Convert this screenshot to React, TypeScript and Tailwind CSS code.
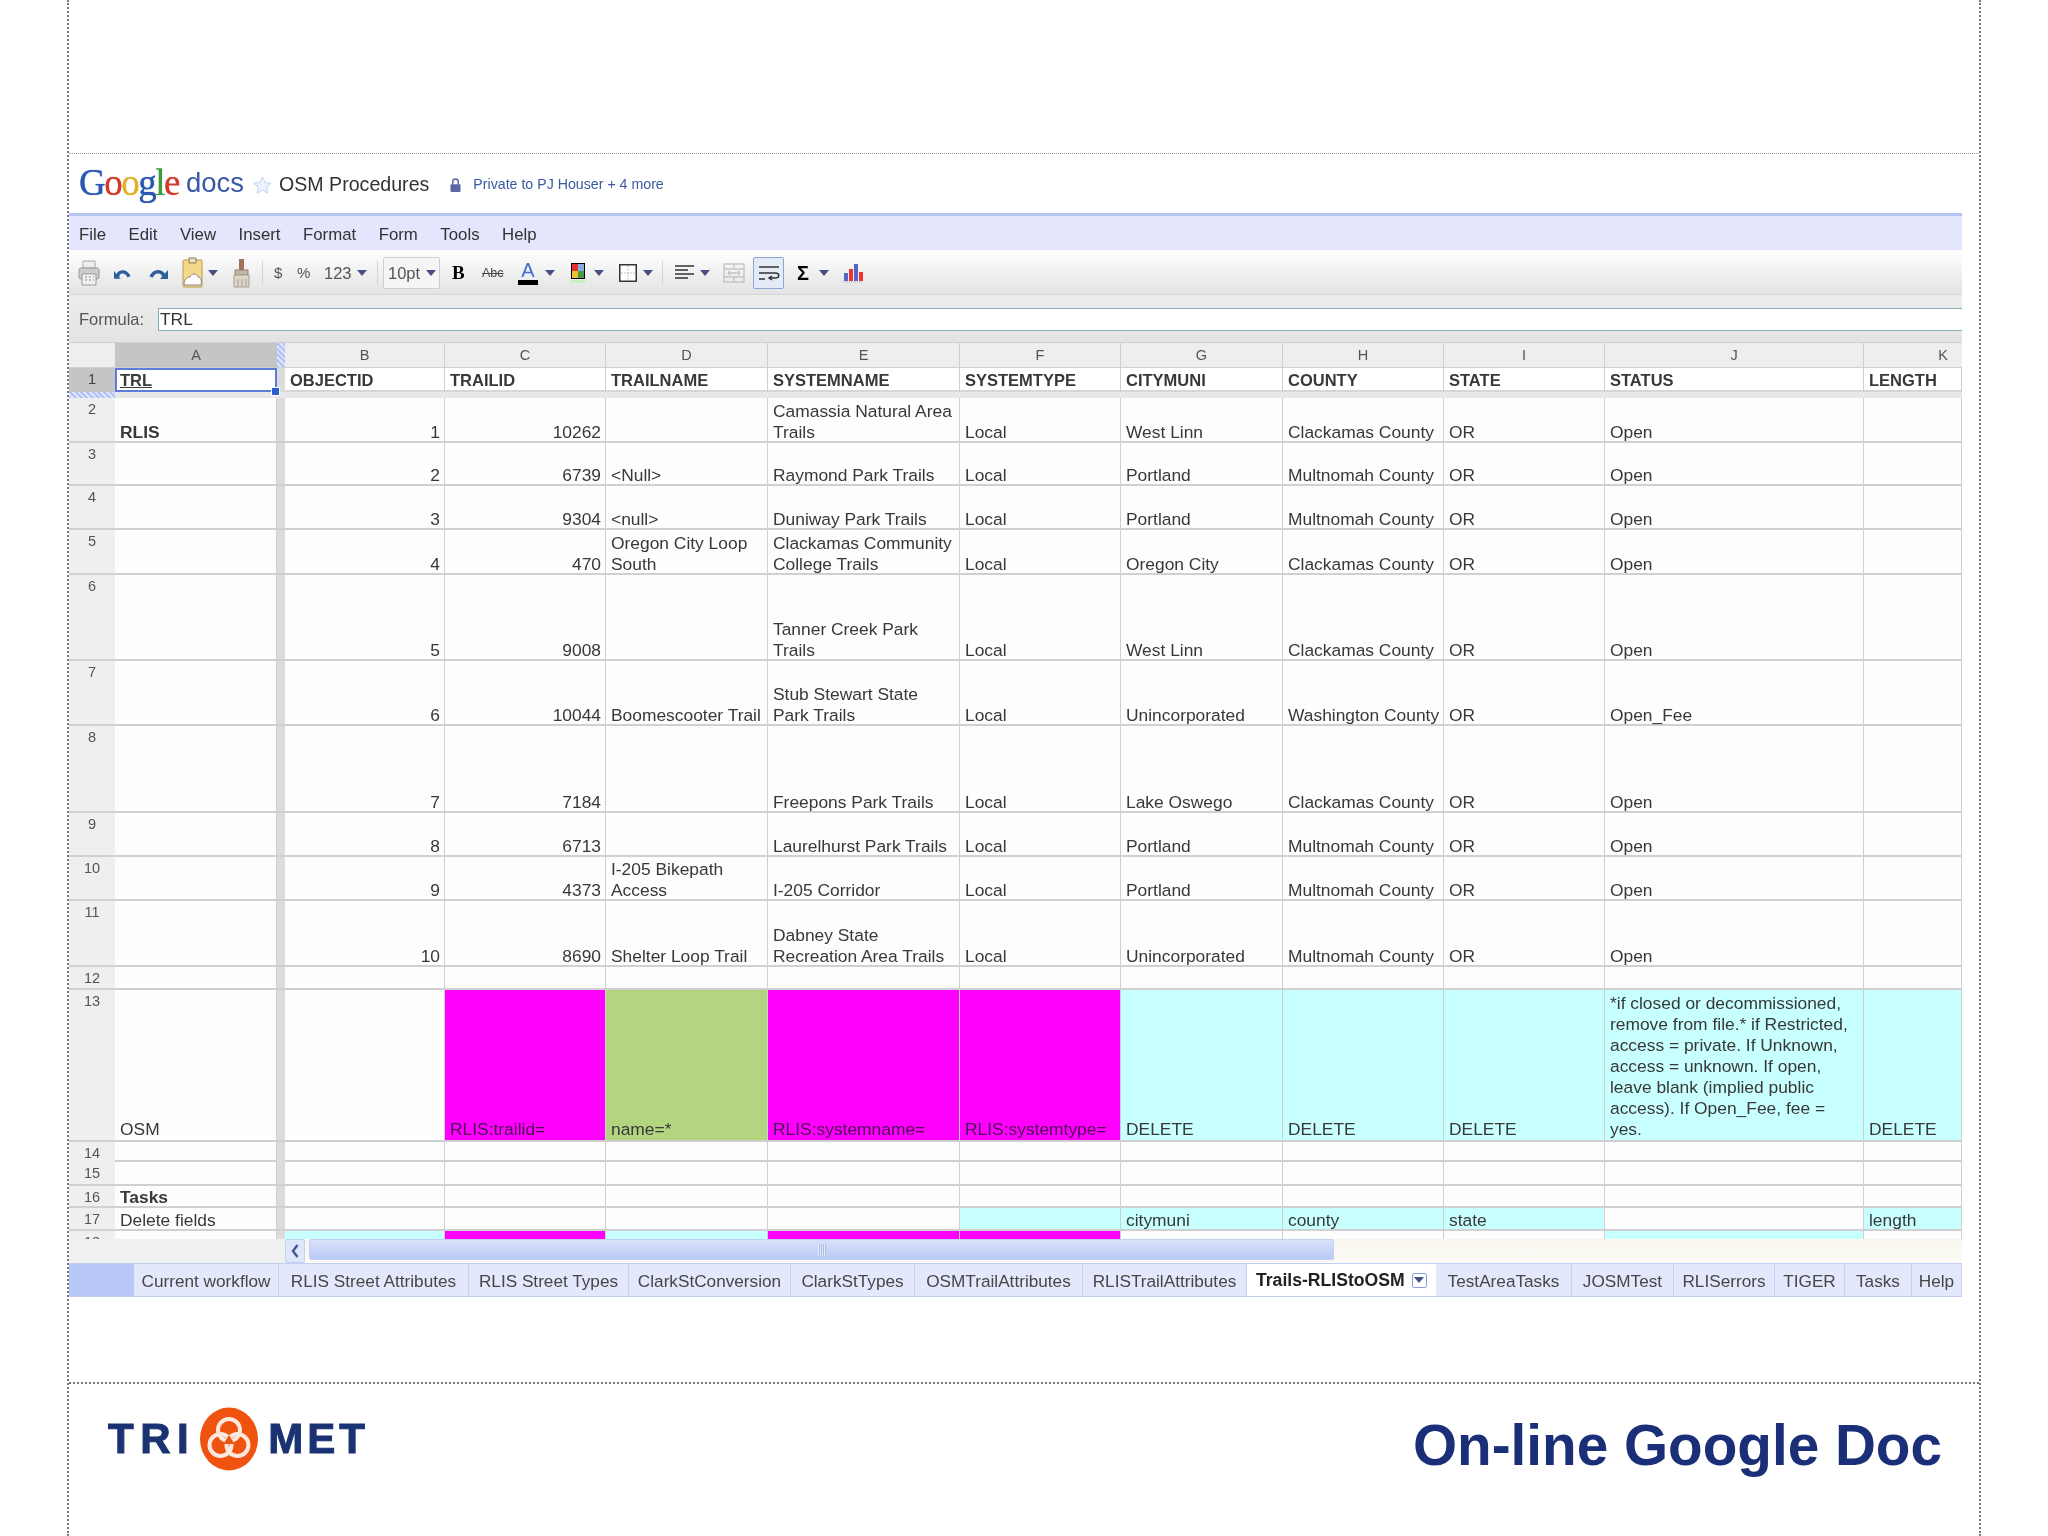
import React from "react";
import { clsx } from "clsx";

// shared column template: row header, A, freeze bar, B..K
const GRID = "grid grid-cols-[46px_162px_8px_160px_161px_162px_192px_161px_162px_161px_161px_259px_98px]";

const CY = "bg-[#c8ffff]";
const MG = "bg-[#ff00ff]";
const GR = "bg-[#b3d580]";

type RowData = { n: number; h: string; a?: string; boldA?: boolean; b?: string; c?: string; d?: string; e?: string; f?: string; g?: string; hh?: string; i?: string; j?: string; k?: string };

const trails: RowData[] = [
  { n: 2, h: "h-[45px]", a: "RLIS", boldA: true, b: "1", c: "10262", e: "Camassia Natural Area\nTrails", f: "Local", g: "West Linn", hh: "Clackamas County", i: "OR", j: "Open" },
  { n: 3, h: "h-[43px]", b: "2", c: "6739", d: "<Null>", e: "Raymond Park Trails", f: "Local", g: "Portland", hh: "Multnomah County", i: "OR", j: "Open" },
  { n: 4, h: "h-[44px]", b: "3", c: "9304", d: "<null>", e: "Duniway Park Trails", f: "Local", g: "Portland", hh: "Multnomah County", i: "OR", j: "Open" },
  { n: 5, h: "h-[45px]", b: "4", c: "470", d: "Oregon City Loop\nSouth", e: "Clackamas Community\nCollege Trails", f: "Local", g: "Oregon City", hh: "Clackamas County", i: "OR", j: "Open" },
  { n: 6, h: "h-[86px]", b: "5", c: "9008", e: "Tanner Creek Park\nTrails", f: "Local", g: "West Linn", hh: "Clackamas County", i: "OR", j: "Open" },
  { n: 7, h: "h-[65px]", b: "6", c: "10044", d: "Boomescooter Trail", e: "Stub Stewart State\nPark Trails", f: "Local", g: "Unincorporated", hh: "Washington County", i: "OR", j: "Open_Fee" },
  { n: 8, h: "h-[87px]", b: "7", c: "7184", e: "Freepons Park Trails", f: "Local", g: "Lake Oswego", hh: "Clackamas County", i: "OR", j: "Open" },
  { n: 9, h: "h-[44px]", b: "8", c: "6713", e: "Laurelhurst Park Trails", f: "Local", g: "Portland", hh: "Multnomah County", i: "OR", j: "Open" },
  { n: 10, h: "h-[44px]", b: "9", c: "4373", d: "I-205 Bikepath\nAccess", e: "I-205 Corridor", f: "Local", g: "Portland", hh: "Multnomah County", i: "OR", j: "Open" },
  { n: 11, h: "h-[66px]", b: "10", c: "8690", d: "Shelter Loop Trail", e: "Dabney State\nRecreation Area Trails", f: "Local", g: "Unincorporated", hh: "Multnomah County", i: "OR", j: "Open" },
];

const headers = ["OBJECTID", "TRAILID", "TRAILNAME", "SYSTEMNAME", "SYSTEMTYPE", "CITYMUNI", "COUNTY", "STATE", "STATUS", "LENGTH"];
const letters = ["B", "C", "D", "E", "F", "G", "H", "I", "J"];

const tabs: [string, string][] = [
  ["Current workflow", "w-[145px]"],
  ["RLIS Street Attributes", "w-[190px]"],
  ["RLIS Street Types", "w-[160px]"],
  ["ClarkStConversion", "w-[162px]"],
  ["ClarkStTypes", "w-[124px]"],
  ["OSMTrailAttributes", "w-[168px]"],
  ["RLISTrailAttributes", "w-[164px]"],
];
const tabsAfter: [string, string][] = [
  ["TestAreaTasks", "w-[136px]"],
  ["JOSMTest", "w-[102px]"],
  ["RLISerrors", "w-[101px]"],
  ["TIGER", "w-[70px]"],
  ["Tasks", "w-[67px]"],
  ["Help", "w-[50px]"],
];

function Cell({ children, right, bg, className }: { children?: React.ReactNode; right?: boolean; bg?: string; className?: string }) {
  return (
    <div className={clsx("flex items-end border-r border-[#cfcfd2] pl-[5px] pr-[4px] whitespace-pre", right && "justify-end", bg, className)}>
      <span className="-mb-[2px] block">{children}</span>
    </div>
  );
}

function RowNum({ n }: { n: number }) {
  return <div className="bg-[#efefef] pt-[2px] text-center text-[14.5px] leading-[18px] text-[#555]">{n}</div>;
}

function Bar() {
  return <div className="bg-[#dcdcdc]" />;
}

function Caret({ className }: { className?: string }) {
  return (
    <svg viewBox="0 0 10 6" className={clsx("h-[6px] w-[10px]", className)}>
      <path d="M0 0h10L5 6z" fill="#454f86" />
    </svg>
  );
}

function Sep({ className }: { className?: string }) {
  return <div className={clsx("h-[24px] w-px bg-[#d4d4d4]", className)} />;
}

function Toolbar() {
  return (
    <div className="flex h-[45px] items-center border-b border-[#d6d6d6] bg-gradient-to-b from-white to-[#e3e3e3] pt-[2px] text-[16.5px] text-[#555]">
      <svg viewBox="0 0 22 26" className="ml-[9px] h-[26px] w-[22px]" fill="none">
        <path d="M5 1h12v7H5z" fill="#eee" stroke="#aaa" />
        <rect x="1" y="8" width="20" height="11" rx="2" fill="#ccc" stroke="#999" />
        <path d="M4 14h14v11H4z" fill="#f2f2f2" stroke="#999" />
        <path d="M7 17h2M11 17h2M15 17h1M7 20h2M11 20h2M15 20h1" stroke="#888" />
      </svg>
      <svg viewBox="0 0 18 14" className="ml-[14px] h-[14px] w-[17px]" fill="none">
        <path d="M4 11C4 5 12 3 16 11" stroke="#2b5f9b" strokeWidth="3.5" />
        <path d="M0 5l0 8 7 0z" fill="#2b5f9b" />
      </svg>
      <svg viewBox="0 0 20 14" className="ml-[17px] h-[14px] w-[20px]" fill="none">
        <path d="M16 11C15 5 7 3 3 11" stroke="#2b5f9b" strokeWidth="3.5" />
        <path d="M20 4l0 9-8 0z" fill="#2b5f9b" />
      </svg>
      <svg viewBox="0 0 21 32" className="ml-[14px] h-[32px] w-[21px]" fill="none">
        <rect x="1" y="3" width="19" height="27" rx="1" fill="#f4d98d" stroke="#b99b4c" />
        <path d="M7 1h7v5H7z" fill="#e8e0c8" stroke="#8a7a50" />
        <path d="M2 28c0-6 3-8 6-8 1-4 7-4 8 0 3 0 4 4 3 8z" fill="#fff" stroke="#888" />
      </svg>
      <Caret className="ml-[5px]" />
      <svg viewBox="0 0 19 32" className="ml-[14px] h-[32px] w-[19px]" fill="none">
        <path d="M7 2h5v11H7z" fill="#a5705a" />
        <path d="M3 13h13v5H3z" fill="#c6b6a6" stroke="#8f8070" />
        <path d="M2 18h15v12H2z" fill="#dcd6c8" stroke="#a8a090" />
        <path d="M6 22v8M10 22v8M14 22v8" stroke="#a8a090" />
      </svg>
      <Sep className="ml-[11px]" />
      <span className="ml-[11px] w-[8px] text-[15px]">$</span>
      <span className="ml-[15px] w-[13px] text-[15px]">%</span>
      <span className="ml-[14px] w-[27px]">123</span>
      <Caret className="ml-[6px]" />
      <Sep className="ml-[10px]" />
      <div className="ml-[5px] flex h-[32px] w-[57px] items-center justify-between rounded-[2px] border border-[#cfcfcf] bg-[#f5f5f5] pl-[4px] pr-[3px]">
        <span>10pt</span>
        <Caret />
      </div>
      <b className="ml-[12px] w-[14px] font-['Liberation_Serif',serif] text-[19px] text-black">B</b>
      <span className="ml-[16px] w-[22px] text-[12.5px] text-[#444] line-through">Abc</span>
      <div className="ml-[15px] flex w-[18px] flex-col items-center">
        <span className="text-[20px] leading-[19px] text-[#3f6fd0]">A</span>
        <div className="h-[5px] w-[20px] bg-black" />
      </div>
      <Caret className="ml-[8px]" />
      <div className="ml-[16px] flex w-[14px] flex-col">
        <div className="grid h-[16px] w-[14px] grid-cols-2 border border-black">
          <div className="bg-[#e43030]" />
          <div className="bg-[#7fb0e0]" />
          <div className="bg-[#e8c430]" />
          <div className="bg-[#4a9a4a]" />
        </div>
        <div className="mt-[1px] h-[3px] w-[14px] bg-[#c8f0c0]" />
      </div>
      <Caret className="ml-[9px]" />
      <svg viewBox="0 0 18 18" className="ml-[15px] h-[18px] w-[18px]" fill="none">
        <rect x="0.75" y="0.75" width="16.5" height="16.5" fill="#fff" stroke="#333" strokeWidth="1.5" />
        <path d="M9 2v14M2 9h14" stroke="#aaa" strokeDasharray="1.5 1.5" />
      </svg>
      <Caret className="ml-[6px]" />
      <Sep className="ml-[9px]" />
      <svg viewBox="0 0 19 16" className="ml-[12px] h-[16px] w-[19px]" stroke="#333" strokeWidth="1.6">
        <path d="M0 1h19M0 5h13M0 9h19M0 13h13" />
      </svg>
      <Caret className="ml-[6px]" />
      <svg viewBox="0 0 22 20" className="ml-[13px] h-[20px] w-[22px]" fill="none" stroke="#c4c4c4" strokeWidth="1.4">
        <rect x="1" y="1" width="20" height="18" />
        <path d="M1 6h20M1 14h20M11 1v5M11 14v5M5 10h12M5 10l2-2M5 10l2 2M17 10l-2-2M17 10l-2 2" />
      </svg>
      <div className="ml-[8px] flex h-[32px] w-[31px] items-center justify-center rounded-[2px] border border-[#8aa6d6] bg-[#e4ebf6]">
        <svg viewBox="0 0 22 16" className="h-[16px] w-[22px]" fill="none" stroke="#333" strokeWidth="1.5">
          <path d="M1 2h20M1 8h16c5 0 5 5 0 5h-5M1 14h6M14 11l-3 2 3 2" />
        </svg>
      </div>
      <b className="ml-[13px] w-[12px] text-[20px] text-black">Σ</b>
      <Caret className="ml-[10px]" />
      <svg viewBox="0 0 20 20" className="ml-[14px] h-[20px] w-[20px]">
        <path d="M1 10h4v8H1z" fill="#5566c8" />
        <path d="M6 6h4v12H6z" fill="#e33" />
        <path d="M11 1h4v17h-4z" fill="#5566c8" />
        <path d="M16 9h4v9h-4z" fill="#e33" />
        <path d="M0 19h20" stroke="#aaa" strokeDasharray="1 1" />
      </svg>
    </div>
  );
}

function Triskele() {
  return (
    <svg viewBox="0 0 60 64" className="h-[64px] w-[60px]" fill="none">
      <ellipse cx="30" cy="32" rx="29" ry="31.5" fill="#f0530f" />
      <g stroke="#fbe9df" strokeWidth="4">
        <circle cx="30" cy="23" r="11" />
        <circle cx="38.5" cy="38" r="11" />
        <circle cx="21.5" cy="38" r="11" />
      </g>
      <path d="M30 28l5.5 9h-11z" fill="#f0530f" />
    </svg>
  );
}

export default function App() {
  return (
    <div className="h-[1536px] w-[2048px] overflow-hidden bg-white pl-[67px] font-['Liberation_Sans',Arial,sans-serif] blur-[0.4px]">
      <div className="flex h-full w-[1914px] flex-col border-x-2 border-dotted border-[#777]">
        <div className="h-[154px] border-b border-dotted border-[#999]" />

        <div className="w-[1893px]">
          {/* title bar */}
          <div className="flex h-[59px] items-center pt-[3px]">
            <span className="-mt-[5px] ml-[10px] font-['Liberation_Serif',serif] text-[37px] leading-none tracking-[-1.5px] [text-shadow:0_0_1px_currentColor]">
              <span className="text-[#2a57b0]">G</span>
              <span className="text-[#d13a2a]">o</span>
              <span className="text-[#e0b028]">o</span>
              <span className="text-[#2a57b0]">g</span>
              <span className="text-[#3d9a3c]">l</span>
              <span className="text-[#d13a2a]">e</span>
            </span>
            <span className="-mt-[5px] ml-[7px] text-[27.5px] leading-none text-[#3a5aa8]">docs</span>
            <svg viewBox="0 0 20 20" className="ml-[9px] h-[19px] w-[19px]" fill="#eef4fd" stroke="#bcd0ee">
              <path d="M10 1l2.7 6 6.3.6-4.8 4.2 1.5 6.4L10 14.8l-5.7 3.4 1.5-6.4L1 7.6 7.3 7z" />
            </svg>
            <span className="ml-[7px] text-[19.6px] text-[#333]">OSM Procedures</span>
            <svg viewBox="0 0 12 16" className="ml-[21px] h-[15px] w-[11px]">
              <path d="M3 7V4a3 3 0 0 1 6 0v3" fill="none" stroke="#5d67a8" strokeWidth="1.6" />
              <rect x="0.5" y="6.5" width="11" height="8.5" rx="1" fill="#5d67a8" />
            </svg>
            <span className="ml-[12px] text-[14.2px] text-[#3b5aa2]">Private to PJ Houser + 4 more</span>
          </div>

          {/* menu */}
          <div className="flex h-[37px] items-center gap-[22.5px] border-t-[3px] border-[#b7c5f3] bg-[#e3e6fc] pl-[10px] pt-[3px] text-[16.8px] text-[#333]">
            {["File", "Edit", "View", "Insert", "Format", "Form", "Tools", "Help"].map((m) => (
              <span key={m}>{m}</span>
            ))}
          </div>

          <Toolbar />

          {/* formula */}
          <div className="flex h-[47px] items-center bg-gradient-to-b from-[#ededed] to-[#e3e3e3] pt-[1px]">
            <span className="ml-[10px] w-[79px] text-[16.5px] text-[#555]">Formula:</span>
            <div className="flex h-[23px] flex-1 items-center border border-r-0 border-[#86aebc] bg-white pl-[1px] text-[17.4px] text-[#333]">TRL</div>
          </div>

          {/* sheet */}
          <div className="text-[17.4px] leading-[21px] text-[#383838]">
            <div className={clsx(GRID, "h-[26px] border-y border-[#cfcfcf] bg-[#eeedef] text-[14.5px] text-[#555]")}>
              <div className="bg-[#eeeeee]" />
              <div className="flex items-center justify-center bg-[#c5c5c5]">A</div>
              <div className="bg-[repeating-linear-gradient(45deg,#b3c2f4_0_2px,#dde4fb_2px_4px)]" />
              {letters.map((l) => (
                <div key={l} className="flex items-center justify-center border-r border-[#cfcfd2]">{l}</div>
              ))}
              <div className="flex items-center justify-end pr-[14px]">K</div>
            </div>

            <div className={clsx(GRID, "h-[24px] border-b-2 border-[#d6d6d6] bg-white")}>
              <div className="bg-[#c5c5c5] text-center text-[14.5px] leading-[22px] text-[#444]">1</div>
              <div className="relative border-2 border-[#5c7ed8] px-[3px] text-[16.5px] font-bold leading-[20px] underline">
                TRL
                <div className="absolute -bottom-[5px] -right-[4px] h-[7px] w-[7px] bg-[#2d5fd0] ring-1 ring-white" />
              </div>
              <Bar />
              {headers.map((h) => (
                <div key={h} className="flex items-center overflow-hidden border-r border-[#cfcfd2] pl-[5px] pr-[4px] text-[16.5px] font-bold">{h}</div>
              ))}
            </div>
            <div className="flex h-[6px] bg-[#e8e8e8]">
              <div className="w-[46px] bg-[repeating-linear-gradient(45deg,#b3c2f4_0_2px,#dde4fb_2px_4px)]" />
            </div>

            {trails.map((r) => (
              <div key={r.n} className={clsx(GRID, r.h, "border-b-2 border-[#d0d0d2] bg-[#fdfdfd]")}>
                <RowNum n={r.n} />
                <Cell className={clsx(r.boldA && "font-bold")}>{r.a}</Cell>
                <Bar />
                <Cell right>{r.b}</Cell>
                <Cell right>{r.c}</Cell>
                <Cell>{r.d}</Cell>
                <Cell>{r.e}</Cell>
                <Cell>{r.f}</Cell>
                <Cell>{r.g}</Cell>
                <Cell>{r.hh}</Cell>
                <Cell>{r.i}</Cell>
                <Cell>{r.j}</Cell>
                <Cell />
              </div>
            ))}

            {/* row 12 */}
            <div className={clsx(GRID, "h-[23px] border-b-2 border-[#d0d0d2] bg-[#fdfdfd]")}>
              <RowNum n={12} />
              <Cell />
              <Bar />
              {letters.map((l) => <Cell key={l} />)}
              <Cell />
            </div>

            {/* row 13 */}
            <div className={clsx(GRID, "h-[152px] border-b-2 border-[#d0d0d2] bg-[#fdfdfd]")}>
              <RowNum n={13} />
              <Cell className="pb-[2px]">OSM</Cell>
              <Bar />
              <Cell />
              <Cell bg={MG} className="pb-[2px] text-[#4a1050]">RLIS:trailid=</Cell>
              <Cell bg={GR} className="pb-[2px]">name=*</Cell>
              <Cell bg={MG} className="pb-[2px] text-[#4a1050]">RLIS:systemname=</Cell>
              <Cell bg={MG} className="pb-[2px] text-[#4a1050]">RLIS:systemtype=</Cell>
              <Cell bg={CY} className="pb-[2px]">DELETE</Cell>
              <Cell bg={CY} className="pb-[2px]">DELETE</Cell>
              <Cell bg={CY} className="pb-[2px]">DELETE</Cell>
              <Cell bg={CY} className="pb-[2px]">{"*if closed or decommissioned,\nremove from file.* if Restricted,\naccess = private. If Unknown,\naccess = unknown. If open,\nleave blank (implied public\naccess). If Open_Fee, fee =\nyes."}</Cell>
              <Cell bg={CY} className="pb-[2px]">DELETE</Cell>
            </div>

            {/* rows 14, 15 */}
            {[{ n: 14, h: "h-[20px]" }, { n: 15, h: "h-[24px]" }].map((r) => (
              <div key={r.n} className={clsx(GRID, r.h, "border-b-2 border-[#d0d0d2] bg-[#fdfdfd]")}>
                <RowNum n={r.n} />
                <Cell />
                <Bar />
                {letters.map((l) => <Cell key={l} />)}
                <Cell />
              </div>
            ))}

            {/* row 16 */}
            <div className={clsx(GRID, "h-[22px] border-b-2 border-[#d0d0d2] bg-[#fdfdfd]")}>
              <RowNum n={16} />
              <Cell className="font-bold">Tasks</Cell>
              <Bar />
              {letters.map((l) => <Cell key={l} />)}
              <Cell />
            </div>

            {/* row 17 */}
            <div className={clsx(GRID, "h-[23px] border-b-2 border-[#d0d0d2] bg-[#fdfdfd]")}>
              <RowNum n={17} />
              <Cell>Delete fields</Cell>
              <Bar />
              <Cell />
              <Cell />
              <Cell />
              <Cell />
              <Cell bg={CY} />
              <Cell bg={CY}>citymuni</Cell>
              <Cell bg={CY}>county</Cell>
              <Cell bg={CY}>state</Cell>
              <Cell />
              <Cell bg={CY}>length</Cell>
            </div>

            {/* row 18, cut off by the scrollbar */}
            <div className={clsx(GRID, "h-[8px] overflow-hidden bg-[#fdfdfd]")}>
              <RowNum n={18} />
              <Cell />
              <Bar />
              <Cell bg={CY} />
              <Cell bg={MG} />
              <Cell bg={CY} />
              <Cell bg={MG} />
              <Cell bg={MG} />
              <Cell />
              <Cell />
              <Cell />
              <Cell bg={CY} />
              <Cell />
            </div>
          </div>

          {/* horizontal scrollbar */}
          <div className="flex h-[24px] bg-gradient-to-b from-[#f8f6ee] to-[#fcfbf6]">
            <div className="w-[216px] bg-[#f0f0f0]" />
            <div className="flex w-[20px] items-center justify-center rounded-[2px] border border-[#c5d0ee] bg-[#dfe6fb]">
              <svg viewBox="0 0 8 14" className="h-[14px] w-[8px]" fill="none" stroke="#41598f" strokeWidth="2.4">
                <path d="M6.5 1L2 7l4.5 6" />
              </svg>
            </div>
            <div className="ml-[4px] flex h-[21px] w-[1025px] items-center justify-center rounded-[2px] border border-[#c3cff0] bg-gradient-to-b from-[#d9e2fb] to-[#b9c9f6]">
              <div className="h-[12px] w-[8px] bg-[repeating-linear-gradient(90deg,#e8edfc_0_1px,#a9b9e6_1px_2px)]" />
            </div>
          </div>

          {/* sheet tabs */}
          <div className="flex h-[34px] border-y border-[#c3cef3] bg-[#b8c9f8] pl-[65px] text-[17.2px] text-[#474747]">
            {tabs.map(([t, w]) => (
              <div key={t} className={clsx("flex items-center justify-center border-r border-[#c9d2f2] bg-[#e3e8fc] pt-[4px]", w)}>{t}</div>
            ))}
            <div className="flex w-[189px] items-center bg-white pl-[9px] font-bold text-[#222]">
              <span className="text-[17.6px]">Trails-RLIStoOSM</span>
              <div className="ml-[7px] flex h-[15px] w-[15px] items-center justify-center rounded-[2px] border border-[#8a9de0]">
                <Caret className="h-[4px] w-[7px]" />
              </div>
            </div>
            {tabsAfter.map(([t, w]) => (
              <div key={t} className={clsx("flex items-center justify-center border-r border-[#c9d2f2] bg-[#e3e8fc] pt-[4px]", w)}>{t}</div>
            ))}
          </div>
        </div>

        <div className="h-[85px]" />

        {/* slide footer */}
        <div className="flex flex-1 items-start justify-between border-t-2 border-dotted border-[#777] pl-[39px] pr-[37px]">
          <div className="mt-[23px] flex items-center text-[42px] font-bold leading-none tracking-[6.5px] text-[#1b3272] [-webkit-text-stroke:1px_#1b3272]">
            <span>TRI</span>
            <div className="ml-[4px] mr-[9px]"><Triskele /></div>
            <span className="tracking-[4px]">MET</span>
          </div>
          <div className="mt-[34px] text-[56.7px] font-bold leading-none text-[#1a2f78]">On-line Google Doc</div>
        </div>
      </div>
    </div>
  );
}
